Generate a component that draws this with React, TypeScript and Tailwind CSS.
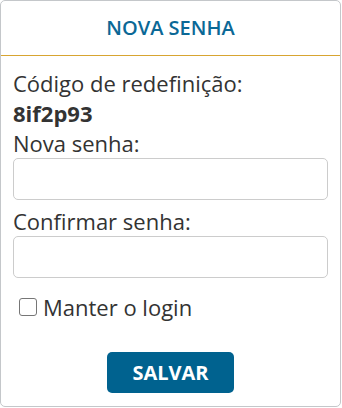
import * as React from 'react';

const App = () => {
  return (
    <div className="w-[342px] h-[408px] bg-white" style={{ fontFamily: '"Open Sans", "Noto Sans", sans-serif' }}>
      <div className="w-[341px] h-[407px] border border-[#c4c7ca] rounded-[5px] flex flex-col">
        {/* Header */}
        <div className="h-[55px] flex items-center justify-center border-b border-[#d8a531] shrink-0">
          <h1 className="text-[20px] font-semibold text-[#0b6896]">NOVA SENHA</h1>
        </div>
        {/* Form */}
        <div className="px-[12px] pt-[12px] text-[22px] leading-[30px] text-[#333333]">
          <div>Código de redefinição:</div>
          <div className="font-bold">8if2p93</div>
          <label className="block">Nova senha:</label>
          <input type="password" className="block w-full h-[42px] border border-[#cccccc] rounded-[5px] bg-white" />
          <label className="block mt-[6px]">Confirmar senha:</label>
          <input type="password" className="block w-full h-[42px] border border-[#cccccc] rounded-[5px] bg-white" />
          <label className="flex items-center gap-[6px] ml-[6px] mt-[14px]">
            <input
              type="checkbox"
              className="appearance-none w-[18px] h-[18px] border-[1.5px] border-[#767676] rounded-[3px] bg-white"
            />
            <span>Manter o login</span>
          </label>
          <div className="flex justify-center mt-[30px]">
            <button className="w-[127px] h-[41px] bg-[#00628f] text-white text-[20px] font-bold rounded-[5px]">
              SALVAR
            </button>
          </div>
        </div>
      </div>
    </div>
  );
};

export default App;
